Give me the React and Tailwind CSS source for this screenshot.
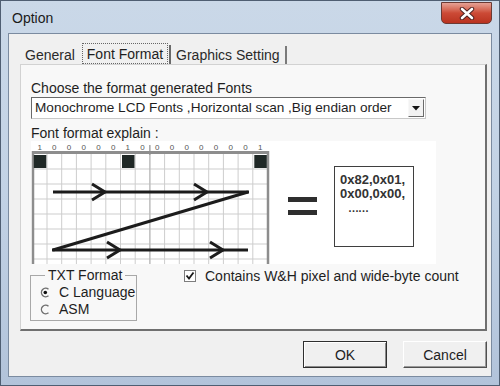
import React from 'react';

// --- diagram: 16 x 8 bit grid with scan arrows ---
const COL = 14.7;
const GX = 1.3;
const bits = [1, 0, 0, 0, 0, 0, 1, 0, 0, 0, 0, 0, 0, 0, 0, 1];

const Chevron = ({ tip, y }) => (
  <polyline
    points={`${tip - 13},${y - 8} ${tip},${y} ${tip - 13},${y + 8}`}
    fill="none"
    stroke="#1c1c1c"
    strokeWidth="3"
  />
);

const BitGrid = () => (
  <svg width="241" height="123" viewBox="0 0 241 123" className="shrink-0">
    {bits.map((b, i) => (
      <text key={i} x={GX + COL * i + 7.35} y="9" fontSize="8" textAnchor="middle" fill="#555" fontFamily="Liberation Sans, sans-serif">
        {b}
      </text>
    ))}
    {/* light grid lines */}
    {Array.from({ length: 15 }).map((_, i) => (
      <line key={'v' + i} x1={GX + COL * (i + 1)} y1="12" x2={GX + COL * (i + 1)} y2="123" stroke="#cdcdcd" strokeWidth="1" />
    ))}
    {[28, 43, 58, 73, 88, 103, 118].map((y) => (
      <line key={'h' + y} x1="2" y1={y} x2="236" y2={y} stroke="#cdcdcd" strokeWidth="1" />
    ))}
    {/* middle marker */}
    <line x1={GX + COL * 8} y1="4" x2={GX + COL * 8} y2="14" stroke="#777" strokeWidth="1" />
    <line x1={GX + COL * 8} y1="14" x2={GX + COL * 8} y2="123" stroke="#b4b4b4" strokeWidth="1" />
    {/* border */}
    <line x1="1" y1="11.5" x2="238" y2="11.5" stroke="#8d8d8d" strokeWidth="3" />
    <line x1="2" y1="10" x2="2" y2="123" stroke="#8d8d8d" strokeWidth="2.5" />
    <line x1="237" y1="10" x2="237" y2="123" stroke="#8d8d8d" strokeWidth="2.5" />
    {/* set bits */}
    {bits.map((b, i) =>
      b ? <rect key={'s' + i} x={GX + COL * i + 1.5} y="14" width="12.5" height="13" fill="#1f2826" /> : null
    )}
    {/* scan path */}
    <line x1="22" y1="51" x2="218" y2="51" stroke="#1c1c1c" strokeWidth="3" />
    <line x1="217" y1="51" x2="22" y2="109" stroke="#1c1c1c" strokeWidth="3" />
    <line x1="21" y1="109" x2="217" y2="109" stroke="#1c1c1c" strokeWidth="3" />
    <Chevron tip={74} y={51} />
    <Chevron tip={176} y={51} />
    <Chevron tip={89} y={109} />
    <Chevron tip={192} y={109} />
  </svg>
);

const Radio = ({ checked }) => (
  <svg width="11" height="11" viewBox="0 0 11 11" className="shrink-0">
    <path d="M8.5 2.2 A4.3 4.3 0 1 0 8.5 8.8" fill="none" stroke="#707070" strokeWidth="1.4" />
    {checked && <circle cx="5.3" cy="5.5" r="1.8" fill="#111" />}
  </svg>
);

export default function App() {
  return (
    <div className="w-[500px] h-[386px] flex flex-col bg-gradient-to-b from-[#cad8e8] via-[#c2d2e5] to-[#b2c3da] border border-[#4f5e72] font-['Liberation_Sans',Arial,sans-serif] text-[14px] text-[#1e1e1e] overflow-hidden">
      {/* Title bar */}
      <div className="h-[32px] shrink-0 flex items-start justify-between">
        <span className="pl-[11px] pt-[8px] leading-[18px] text-[#1a1a1a]">Option</span>
        <button className="mt-[1px] mr-[7px] w-[51px] h-[22px] rounded-b-[5px] border border-[#6b3a34] bg-gradient-to-b from-[#e5a195] via-[#cc4a36] to-[#b9321f] flex items-center justify-center">
          <svg width="16" height="13" viewBox="0 0 16 13">
            <path d="M3 2 L13 11 M13 2 L3 11" stroke="#4a2020" strokeWidth="4.4" strokeLinecap="round" />
            <path d="M3 2 L13 11 M13 2 L3 11" stroke="#ffffff" strokeWidth="2.6" strokeLinecap="round" />
          </svg>
        </button>
      </div>

      {/* Client area */}
      <div className="mx-[7px] h-[344px] shrink-0 bg-[#f0f0f0] border border-[#7b8ba0] flex flex-col pt-[9px]">
        {/* Tabs */}
        <div className="ml-[11px] h-[21px] flex items-end">
          <div className="h-[19px] px-[5px] flex items-center leading-[16px] text-[#2a2a2a]">General</div>
          <div className="h-[21px] ml-[2px] px-[1px] flex items-center border border-dotted border-[#666] leading-[16px]">
            <span className="px-[3px]">Font Format</span>
          </div>
          <div className="h-[19px] w-[2px] bg-[#6a6a6a] ml-[1px]" />
          <div className="h-[19px] px-[5px] flex items-center leading-[16px] text-[#2a2a2a]">Graphics Setting</div>
          <div className="h-[18px] w-[2px] bg-[#7a7a7a]" />
        </div>

        {/* Tab panel */}
        <div className="ml-[11px] mr-[4px] h-[267px] shrink-0 bg-[#f8f8f8] border-t border-l border-[#d2d2d2] border-r-2 border-b-2 border-r-[#6f6f6f] border-b-[#6f6f6f] pl-[10px] pt-[15px]">
          <div className="leading-[16px]">Choose the format generated Fonts</div>
          <div className="mt-[1px] w-[395px] h-[22px] bg-white border border-[#6a6a6a] border-r-[#c8c8c8] border-b-[#c8c8c8] flex items-center">
            <span className="pl-[3px] flex-1 text-[13.6px] leading-[16px] whitespace-nowrap">Monochrome LCD Fonts ,Horizontal scan ,Big endian order</span>
            <div className="mr-[1px] w-[16px] h-[18px] bg-[#f2f2f2] border border-[#f8f8f8] border-r-[#6a6a6a] border-b-[#6a6a6a] flex items-center justify-center">
              <svg width="8" height="5" viewBox="0 0 8 5">
                <path d="M0 0 H8 L4 4.5 Z" fill="#111" />
              </svg>
            </div>
          </div>
          <div className="mt-[6px] leading-[16px]">Font format explain :</div>

          {/* Diagram */}
          <div className="w-[405px] h-[123px] bg-white flex items-start">
            <BitGrid />
            <div className="ml-[16px] mt-[56px] flex flex-col gap-[8px]">
              <div className="w-[29px] h-[5px] bg-[#2e2e2e]" />
              <div className="w-[29px] h-[5px] bg-[#2e2e2e]" />
            </div>
            <div className="ml-[17px] mt-[25px] w-[80px] h-[81px] border-[1.5px] border-[#3f3f3f] pl-[5px] pt-[6px] font-bold text-[13px] leading-[14px] text-[#333]">
              <div>0x82,0x01,</div>
              <div>0x00,0x00,</div>
              <div className="pl-[8px] text-[11px] leading-[14px] tracking-[-1px]">……</div>
            </div>
          </div>

          {/* Options row */}
          <div className="mt-[4px] flex items-start">
            <fieldset className="w-[107px] h-[53px] border border-[#a8a8a8] pl-[9px] -ml-[1px]">
              <legend className="ml-[5px] px-[3px] leading-[14px]">TXT Format</legend>
              <div className="pt-[2px] flex items-center gap-[8px] leading-[17px]">
                <Radio checked />
                <span>C Language</span>
              </div>
              <div className="flex items-center gap-[8px] leading-[17px]">
                <Radio />
                <span>ASM</span>
              </div>
            </fieldset>
            <div className="ml-[47px] h-[16px] flex items-center">
              <div className="w-[12px] h-[12px] bg-white border border-[#7d7d7d] flex items-center justify-center">
                <svg width="10" height="10" viewBox="0 0 10 10">
                  <path d="M1.5 4.5 L4 7.5 L8.5 1.5" fill="none" stroke="#1a1a1a" strokeWidth="1.8" />
                </svg>
              </div>
              <span className="ml-[9px] leading-[16px]">Contains W&amp;H pixel and wide-byte count</span>
            </div>
          </div>
        </div>

        {/* Buttons */}
        <div className="mt-[10px] mr-[4px] flex justify-end gap-[16px]">
          <button className="w-[84px] h-[27px] bg-[#f0f0f0] border border-[#2f2f2f] shadow-[inset_1px_1px_0_#ffffff,inset_-1px_-1px_0_#8a8a8a] leading-[16px]">OK</button>
          <button className="w-[84px] h-[27px] bg-[#f0f0f0] border border-[#ffffff] border-r-[#505050] border-b-[#505050] shadow-[inset_-1px_-1px_0_#9a9a9a] leading-[16px]">Cancel</button>
        </div>
      </div>
    </div>
  );
}
